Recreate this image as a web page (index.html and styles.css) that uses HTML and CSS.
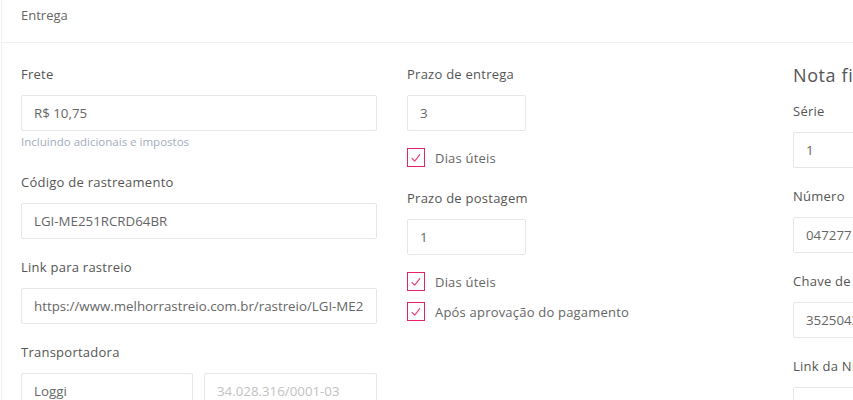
FILE: index.html
```html
<!DOCTYPE html>
<html lang="pt-BR">
<head>
<meta charset="utf-8">
<title>Entrega</title>
<link rel="stylesheet" href="styles.css">
</head>
<body>
<section class="card">
  <header class="card-head">Entrega</header>
  <div class="card-body">
    <div class="col">
      <div class="field with-help">
        <label class="label">Frete</label>
        <input class="input" type="text" value="R$ 10,75" readonly>
        <p class="help">Incluindo adicionais e impostos</p>
      </div>
      <div class="field">
        <label class="label">Código de rastreamento</label>
        <input class="input" type="text" value="LGI-ME251RCRD64BR" readonly>
      </div>
      <div class="field">
        <label class="label">Link para rastreio</label>
        <input class="input" type="text" value="https://www.melhorrastreio.com.br/rastreio/LGI-ME251RCRD64BR" readonly>
      </div>
      <div class="field">
        <label class="label">Transportadora</label>
        <div class="pair">
          <input class="input" type="text" value="Loggi" readonly>
          <input class="input" type="text" placeholder="34.028.316/0001-03" readonly>
        </div>
      </div>
    </div>

    <div class="col">
      <div class="field">
        <label class="label">Prazo de entrega</label>
        <input class="input short" type="text" value="3" readonly>
        <div class="checks">
          <span class="check"><span class="box"><svg viewBox="0 0 18 18"><path d="M4.5 9.6 L7.6 12.6 L13.2 5.2"/></svg></span>Dias úteis</span>
        </div>
      </div>
      <div class="field">
        <label class="label">Prazo de postagem</label>
        <input class="input short" type="text" value="1" readonly>
        <div class="checks">
          <span class="check"><span class="box"><svg viewBox="0 0 18 18"><path d="M4.5 9.6 L7.6 12.6 L13.2 5.2"/></svg></span>Dias úteis</span>
          <span class="check"><span class="box"><svg viewBox="0 0 18 18"><path d="M4.5 9.6 L7.6 12.6 L13.2 5.2"/></svg></span>Após aprovação do pagamento</span>
        </div>
      </div>
    </div>

    <div class="col">
      <h2 class="title">Nota fiscal</h2>
      <div class="field">
        <label class="label">Série</label>
        <input class="input" type="text" value="1" readonly>
      </div>
      <div class="field">
        <label class="label">Número</label>
        <input class="input" type="text" value="047277" readonly>
      </div>
      <div class="field">
        <label class="label">Chave de acesso</label>
        <input class="input" type="text" value="35250433041260065290550010000472771234567890" readonly>
      </div>
      <div class="field">
        <label class="label">Link da NF-e</label>
        <input class="input" type="text" value="" readonly>
      </div>
    </div>
  </div>
</section>
</body>
</html>
```

FILE: styles.css
```css
* { box-sizing: border-box; }
html, body { margin: 0; padding: 0; background: #fff; }
body {
  font-family: "Open Sans", "Liberation Sans", sans-serif;
  color: #555;
  overflow: hidden;
}
.card {
  margin-left: 1px;
  border-left: 1px solid #f0f0f0;
  width: 1300px;
}
.card-head {
  height: 43px;
  padding: 6px 0 0 19px;
  font-size: 13px;
  line-height: 18px;
  color: #666;
  border-bottom: 1px solid #f0f0f0;
}
.card-body {
  display: grid;
  grid-template-columns: 356px 356px 356px;
  column-gap: 30px;
  padding: 22px 0 0 19px;
}
.col { display: flex; flex-direction: column; }
.field { display: flex; flex-direction: column; margin-bottom: 19px; }
.label {
  font-size: 13px;
  line-height: 18px;
  color: #555;
  letter-spacing: 0.25px;
  margin-bottom: 12px;
}
.input {
  display: block;
  width: 100%;
  height: 36px;
  border: 1px solid #e6e6e6;
  border-radius: 2px;
  padding: 0 12px;
  font-family: inherit;
  font-size: 13.3px;
  color: #666;
  background: #fff;
  outline: none;
}
.input::placeholder { color: #c2c2c2; }
.input.short { width: 119px; }
.help {
  margin: 4px 0 5px;
  font-size: 11.5px;
  line-height: 14px;
  color: #a3abbb;
}
.pair { display: grid; grid-template-columns: 172px 173px; column-gap: 11px; }
.checks { display: flex; flex-direction: column; gap: 11px; margin-top: 17px; margin-bottom: 3px; }
.check {
  display: flex;
  align-items: center;
  gap: 10px;
  font-size: 13px;
  line-height: 18px;
  color: #666;
  letter-spacing: 0.2px;
}
.box {
  width: 18px;
  height: 19px;
  border: 1px solid #e3245f;
  display: inline-flex;
  align-items: center;
  justify-content: center;
  flex: none;
}
.box svg { width: 16px; height: 16px; }
.box path { fill: none; stroke: #f0417a; stroke-width: 1.3; stroke-linecap: round; stroke-linejoin: round; }
.title {
  margin: -2px 0 15px;
  font-size: 18px;
  line-height: 24px;
  font-weight: 400;
  color: #555;
  letter-spacing: 0.6px;
}
```
